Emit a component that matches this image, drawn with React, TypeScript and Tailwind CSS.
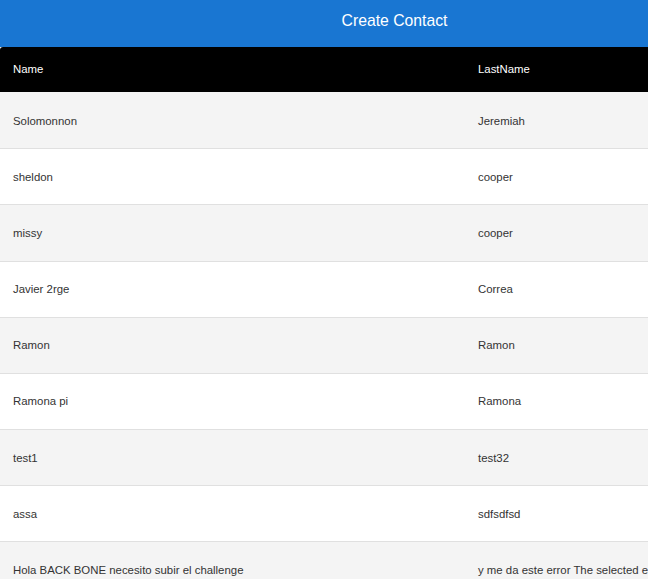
import React from "react";

const rows: [string, string, string][] = [
  ["Solomonnon", "Jeremiah", "h-[57px] pt-[4px]"],
  ["sheldon", "cooper", "h-[56px] pt-[2px]"],
  ["missy", "cooper", "h-[57px] pt-[2px]"],
  ["Javier 2rge", "Correa", "h-[56px]"],
  ["Ramon", "Ramon", "h-[56px]"],
  ["Ramona pi", "Ramona", "h-[56px]"],
  ["test1", "test32", "h-[56px] pt-[2px]"],
  ["assa", "sdfsdfsd", "h-[56px] pt-[2px]"],
  [
    "Hola BACK BONE necesito subir el challenge",
    "y me da este error The selected element is not a valid contact record",
    "h-[56px] pt-[2px]",
  ],
];

export default function App() {
  return (
    <div
      className="w-[648px] h-[579px] overflow-hidden bg-white"
      style={{ fontFamily: '"Liberation Sans", Arial, sans-serif' }}
    >
      <div className="w-[789px]">
        <div className="h-[47px] bg-[#1976d2] flex items-center justify-center pb-[5px] text-white text-[15.75px]">
          Create Contact
        </div>
        <div className="h-[45px] bg-black rounded-t-[3px] flex items-center text-white text-[11.4px]">
          <div className="w-[465px] pl-[13px]">Name</div>
          <div className="pl-[13px]">LastName</div>
        </div>
        {rows.map(([a, b, h], i) => (
          <div
            key={i}
            className={`${h} border-b border-[#e0e0e0] flex items-center text-[11.4px] text-[#333333] whitespace-nowrap ${
              i % 2 === 0 ? "bg-[#f4f4f4]" : "bg-white"
            }`}
          >
            <div className="w-[465px] pl-[13px] shrink-0">{a}</div>
            <div className="pl-[13px]">{b}</div>
          </div>
        ))}
      </div>
    </div>
  );
}
